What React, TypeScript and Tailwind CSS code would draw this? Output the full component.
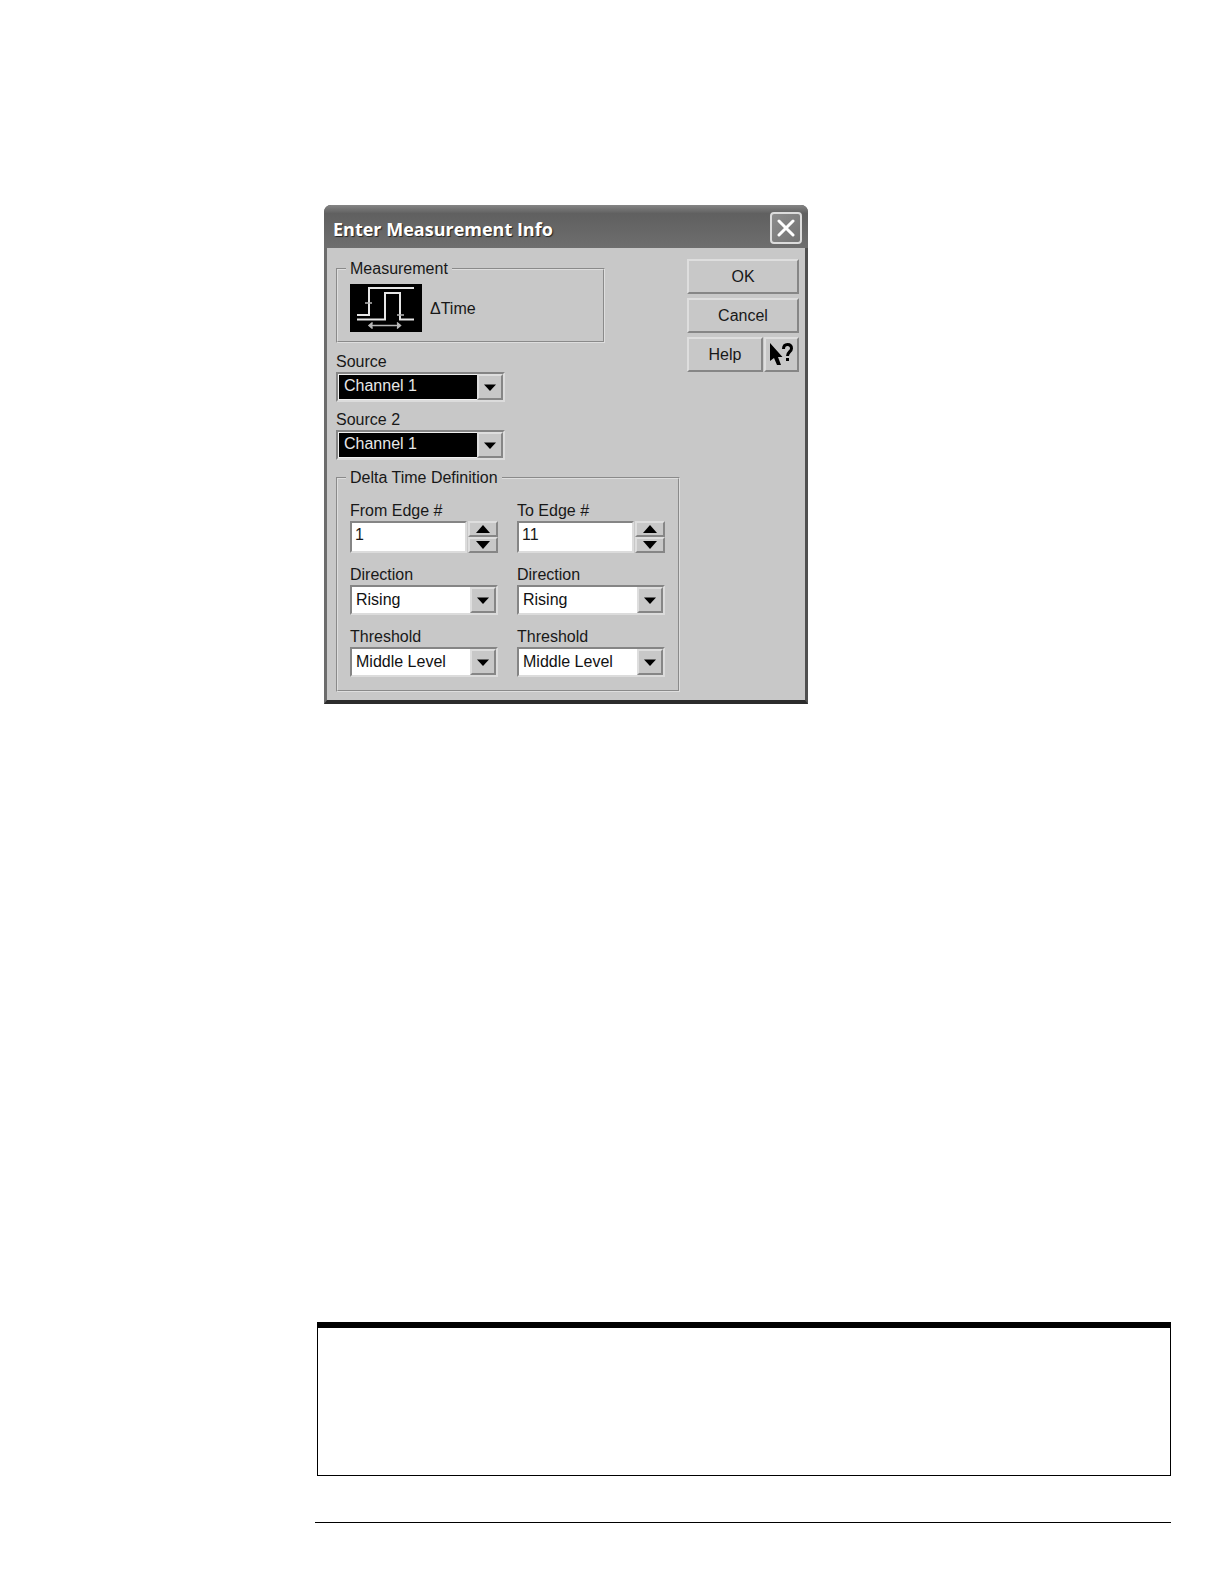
import { useId, useState, type ReactNode } from "react";

const raised =
  "border-2 border-t-[#dedede] border-l-[#dedede] border-r-[#868686] border-b-[#868686] bg-[#c8c8c8]";
const sunken =
  "border-2 border-t-[#858585] border-l-[#858585] border-r-[#dcdcdc] border-b-[#dcdcdc]";

function Combo({ label, options, dark = false }: { label: string; options: string[]; dark?: boolean }) {
  const id = useId();
  return (
    <div className="flex flex-col">
      <label htmlFor={id} className="leading-5">
        {label}
      </label>
      <div className={`relative h-[30px] ${sunken} ${dark ? "bg-black" : "bg-white"}`}>
        <select
          id={id}
          className={
            dark
              ? "block h-full w-full appearance-none border border-[#f0f0f0] bg-black pb-[2px] pl-[5px] leading-5 text-[#e8e8e8] outline-none"
              : "block h-full w-full appearance-none bg-white pl-1 leading-5 text-[#111] outline-none"
          }
        >
          {options.map((o) => (
            <option key={o}>{o}</option>
          ))}
        </select>
        <span
          className={`pointer-events-none absolute inset-y-0 right-0 flex w-[26px] items-center justify-center ${raised}`}
        >
          <svg width="12" height="7" viewBox="0 0 12 7" aria-hidden="true">
            <path d="M0 0.5H12L6 7Z" fill="#000" />
          </svg>
        </span>
      </div>
    </div>
  );
}

function Spinner({ label, initial }: { label: string; initial: number }) {
  const id = useId();
  const [value, setValue] = useState(initial);
  return (
    <div className="flex flex-col">
      <label htmlFor={id} className="leading-5">
        {label}
      </label>
      <div className="flex h-8 gap-px">
        <input
          id={id}
          type="text"
          value={value}
          onChange={(e) => setValue(Number(e.target.value) || 0)}
          className={`w-[117px] bg-white pb-1 pl-[3px] leading-5 outline-none ${sunken}`}
        />
        <div className="flex w-[30px] flex-col">
          <button
            type="button"
            aria-label={`Increase ${label}`}
            onClick={() => setValue(value + 1)}
            className={`flex flex-1 items-center justify-center ${raised}`}
          >
            <svg width="14" height="8" viewBox="0 0 14 8">
              <path d="M0 8H14L7 0Z" fill="#000" />
            </svg>
          </button>
          <button
            type="button"
            aria-label={`Decrease ${label}`}
            onClick={() => setValue(value - 1)}
            className={`flex flex-1 items-center justify-center ${raised}`}
          >
            <svg width="14" height="8" viewBox="0 0 14 8">
              <path d="M0 0H14L7 8Z" fill="#000" />
            </svg>
          </button>
        </div>
      </div>
    </div>
  );
}

function Group({ title, className, children }: { title: string; className: string; children: ReactNode }) {
  return (
    <fieldset className={`border-2 [border-style:groove] border-[#dedede] pl-3 ${className}`}>
      <legend className="-ml-1 px-1 leading-5">{title}</legend>
      {children}
    </fieldset>
  );
}

function PushButton({ children, className = "" }: { children: ReactNode; className?: string }) {
  return (
    <button type="button" className={`flex h-[35px] items-center justify-center leading-5 ${raised} ${className}`}>
      {children}
    </button>
  );
}

function DeltaTimeIcon() {
  return (
    <svg width="72" height="48" viewBox="0 0 72 48" className="bg-black" aria-hidden="true">
      <g fill="none" stroke="#e6e6e6" strokeWidth="2">
        <path d="M7 31H19V4H64" />
        <path d="M7 35.5H35V9H50V35.5H64" />
      </g>
      <g fill="none" stroke="#b8b8b8" strokeWidth="1.5">
        <path d="M15 19H22M47 31H54M20 41.5H50" />
        <path d="M22.5 38.5L19 41.5L22.5 44.500M47 38.5L50.500 41.5L47 44.500" fill="#b8b8b8" />
      </g>
    </svg>
  );
}

export default function App() {
  return (
    <main className="min-h-screen bg-white pt-[205px] pr-[53px] pb-[59px] pl-[315px] font-['Liberation_Sans',Arial,sans-serif] text-[16px] text-[#181818]">
      <section
        aria-labelledby="dialog-title"
        className="ml-[9px] max-w-[484px] overflow-hidden rounded-t-[7px] bg-[#444]"
      >
        <header className="flex h-[43px] items-center justify-between bg-linear-to-b from-[#858585] via-[#606060] via-20% to-[#6e6e6e] pt-[3px] pr-[6px] pl-[9px]">
          <h1
            id="dialog-title"
            className="pt-0.5 font-['Open_Sans',sans-serif] text-[18px] leading-6 font-bold text-white [text-shadow:1px_1px_1px_#222]"
          >
            Enter Measurement Info
          </h1>
          <button
            type="button"
            aria-label="Close"
            className="flex size-8 items-center justify-center rounded-[4px] border-2 border-[#dcdcdc] bg-linear-to-br from-[#8c8c8c] to-[#747474]"
          >
            <svg width="18" height="18" viewBox="0 0 18 18">
              <path d="M2 2L16 16M16 2L2 16" stroke="#fff" strokeWidth="3" strokeLinecap="round" />
            </svg>
          </button>
        </header>

        <div className="flex justify-between border-x-[3px] border-b-4 border-r-[#505050] border-b-[#2c2c2c] border-l-[#6c6c6c] bg-[#c8c8c8] pt-[11px] pr-[6px] pb-2 pl-[9px]">
          <div className="flex flex-col">
            <Group title="Measurement" className="w-[269px] pb-[9px]">
              <div className="flex items-center gap-2 pt-[5px]">
                <DeltaTimeIcon />
                <span className="pt-0.5">ΔTime</span>
              </div>
            </Group>

            <div className="mt-[9px] flex w-[169px] flex-col gap-2">
              <Combo label="Source" options={["Channel 1", "Channel 2"]} dark />
              <Combo label="Source 2" options={["Channel 1", "Channel 2"]} dark />
            </div>

            <Group title="Delta Time Definition" className="mt-2 w-[344px] pb-[13px]">
              <div className="flex gap-[19px] pt-[13px]">
                {[
                  { label: "From Edge #", value: 1 },
                  { label: "To Edge #", value: 11 },
                ].map((edge) => (
                  <div key={edge.label} className="flex w-[148px] flex-col gap-3">
                    <Spinner label={edge.label} initial={edge.value} />
                    <Combo label="Direction" options={["Rising", "Falling"]} />
                    <Combo label="Threshold" options={["Middle Level", "Upper Level", "Lower Level"]} />
                  </div>
                ))}
              </div>
            </Group>
          </div>

          <div className="flex w-[112px] flex-col gap-1">
            <PushButton>OK</PushButton>
            <PushButton>Cancel</PushButton>
            <div className="flex gap-px">
              <PushButton className="flex-1">Help</PushButton>
              <button
                type="button"
                aria-label="What's this?"
                className={`flex h-[35px] w-[35px] items-center justify-center ${raised}`}
              >
                <svg width="25" height="24" viewBox="0 0 25 24">
                  <path d="M1 0V18L5 15L8 22H12L9 14H13.500Z" fill="#000" />
                  <path
                    d="M14.500 6C14.500 3 16 1.500 18.500 1.500C21 1.500 22.500 3 22.500 5.500C22.500 8.500 18.500 9 18.500 13"
                    fill="none"
                    stroke="#000"
                    strokeWidth="3"
                  />
                  <rect x="17" y="15" width="3" height="3" fill="#000" />
                </svg>
              </button>
            </div>
          </div>
        </div>
      </section>

      <div className="mt-[618px] ml-[2px] h-[154px] border border-t-6 border-black" />
      <hr className="mt-[46px] border-t border-black" />
    </main>
  );
}
